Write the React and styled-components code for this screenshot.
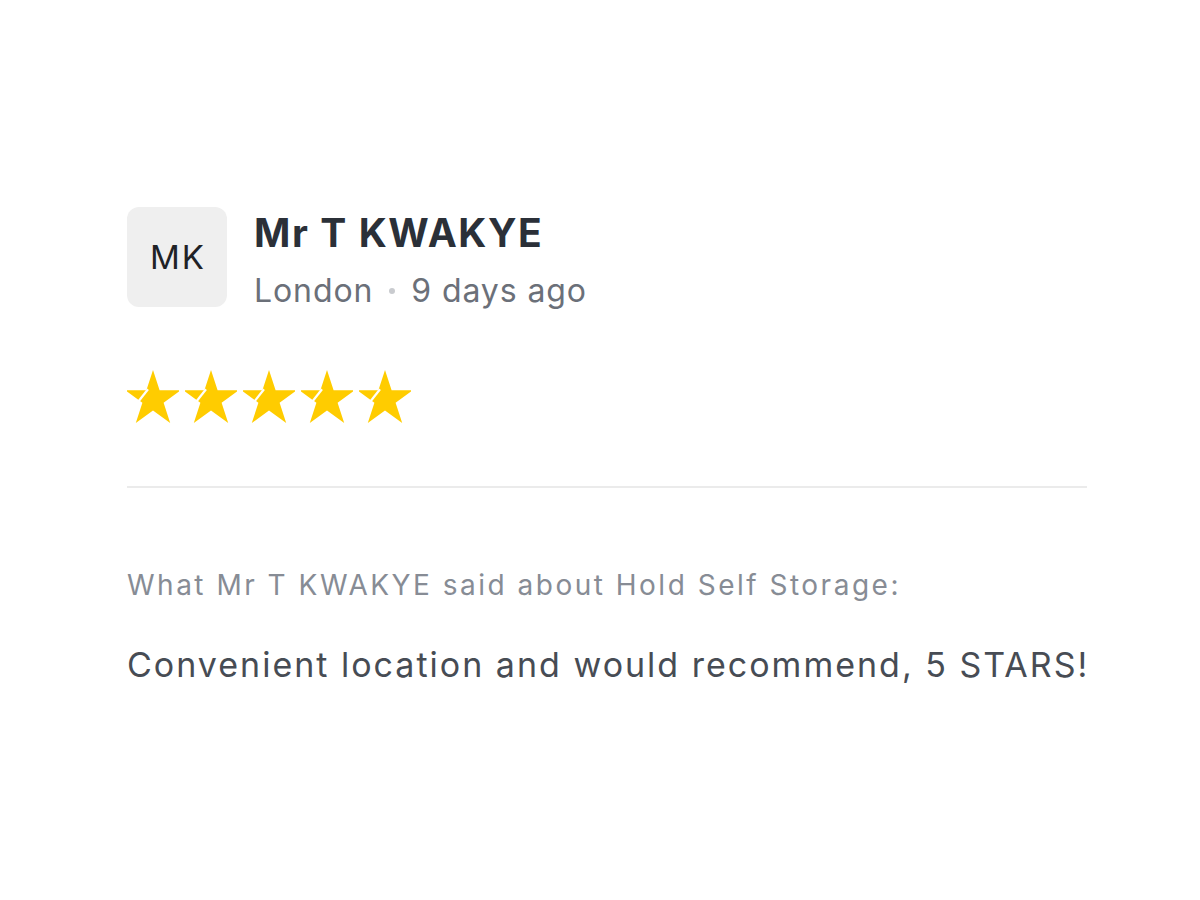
import React from "react";
import styled, { createGlobalStyle } from "styled-components";

const Global = createGlobalStyle`
  html, body { margin: 0; padding: 0; background: #ffffff; }
  body { font-family: Inter, "Noto Sans", sans-serif; -webkit-font-smoothing: antialiased; }
`;

const Page = styled.div`
  width: 1200px;
  height: 900px;
  box-sizing: border-box;
  padding: 207px 113px 0 127px;
`;

const Card = styled.article`
  width: 960px;
  display: flex;
  flex-direction: column;
`;

const Header = styled.header`
  display: flex;
  align-items: flex-start;
  gap: 27px;
`;

const Avatar = styled.div`
  flex: none;
  width: 100px;
  height: 100px;
  border-radius: 12px;
  background: #efefef;
  display: flex;
  align-items: center;
  justify-content: center;
  font-size: 33px;
  color: #1f2226;
  letter-spacing: 2px;
  text-indent: 2px;
`;

const Who = styled.div`
  display: flex;
  flex-direction: column;
  gap: 15px;
  padding-top: 3px;
`;

const Name = styled.h2`
  margin: 0;
  font-size: 39px;
  font-weight: 700;
  color: #2b3038;
  line-height: 1.2;
  letter-spacing: 1.6px;
`;

const Meta = styled.div`
  display: flex;
  align-items: center;
  gap: 16px;
  font-size: 32px;
  color: #6b7079;
  line-height: 1.2;
  letter-spacing: 0.9px;
`;

const Dot = styled.span`
  width: 6px;
  height: 6px;
  border-radius: 50%;
  background: #c9cbcf;
`;

const Stars = styled.div`
  display: flex;
  gap: 6px;
  margin-top: 60px;
`;

const Divider = styled.hr`
  margin: 62px 0 0;
  border: 0;
  height: 2px;
  background: #ebebeb;
`;

const Lead = styled.p`
  margin: 81px 0 0;
  font-size: 28px;
  color: #878c95;
  line-height: 1.2;
  letter-spacing: 2.5px;
`;

const Body = styled.p`
  margin: 42px 0 0;
  font-size: 34px;
  color: #474c54;
  line-height: 1.2;
  letter-spacing: 2px;
  white-space: nowrap;
`;

const Star = () => (
  <svg width="52" height="54" viewBox="-26 -29.3 52 54" aria-hidden="true">
    <polygon
      fill="#ffcc00"
      points="0,-29.3 6.6,-9.1 27.9,-9.1 10.6,3.5 17.2,23.7 0,11.2 -17.2,23.7 -10.6,3.5 -27.9,-9.1 -6.6,-9.1"
    />
    <line x1="-16" y1="4" x2="-5" y2="-10" stroke="#ffffff" strokeWidth="2.2" />
  </svg>
);

export default function App() {
  return (
    <>
      <Global />
      <Page>
        <Card>
          <Header>
            <Avatar>MK</Avatar>
            <Who>
              <Name>Mr T KWAKYE</Name>
              <Meta>
                <span>London</span>
                <Dot />
                <span>9 days ago</span>
              </Meta>
            </Who>
          </Header>
          <Stars>
            {[0, 1, 2, 3, 4].map((i) => (
              <Star key={i} />
            ))}
          </Stars>
          <Divider />
          <Lead>What Mr T KWAKYE said about Hold Self Storage:</Lead>
          <Body>Convenient location and would recommend, 5 STARS!</Body>
        </Card>
      </Page>
    </>
  );
}
